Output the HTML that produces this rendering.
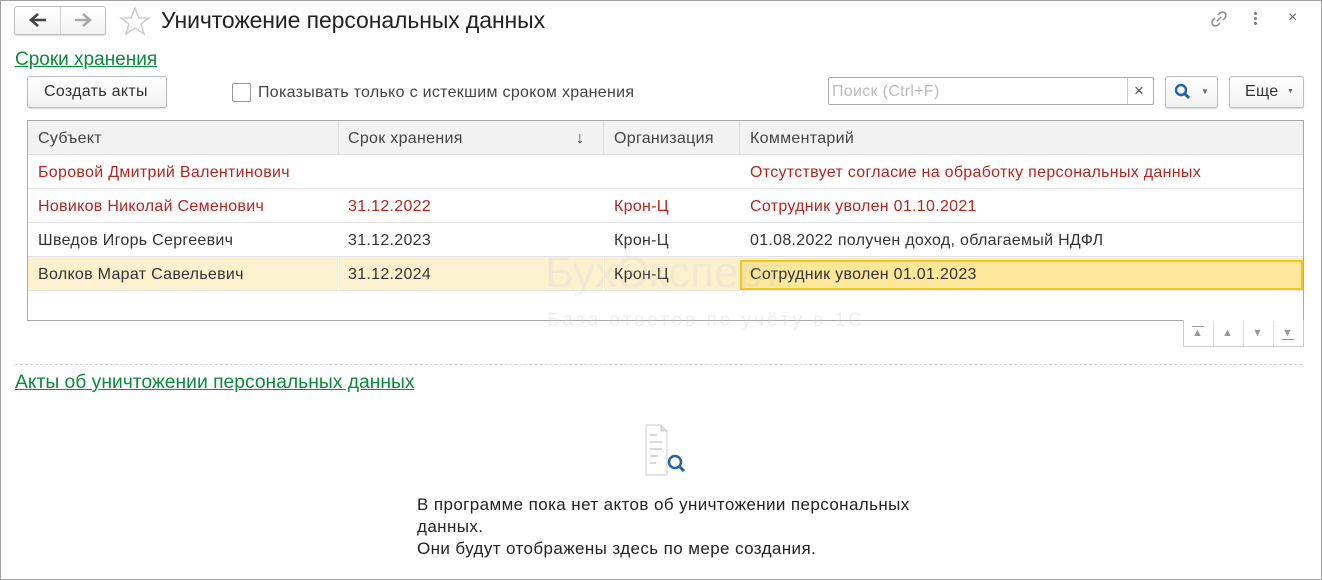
<!DOCTYPE html>
<html><head><meta charset="utf-8"><style>
*{box-sizing:border-box;margin:0;padding:0}
body{width:1322px;height:580px;overflow:hidden;background:#fff;font-family:"Liberation Sans","Noto Sans CJK SC",sans-serif;font-size:16px;letter-spacing:.3px;color:#333;position:relative}
.frame{position:absolute;left:0;top:0;width:1322px;height:580px;border:1px solid #a0a0a0}
.abs{position:absolute;white-space:nowrap}
.btn{position:absolute;border:1px solid #bdbdbd;border-radius:3px;background:linear-gradient(#fff,#f2f2f2);box-shadow:0 1px 1px rgba(0,0,0,.15)}
.link{color:#0a8a3a;text-decoration:underline;font-size:19px;letter-spacing:0}
.row{position:absolute;left:28px;width:1275px;height:34px;border-bottom:1px solid #e4e4e4}
.c{position:absolute;top:9px;white-space:nowrap}
.red{color:#b3261e}
</style></head><body>
<div class="frame"></div>
<div class="btn" style="left:14px;top:6px;width:92px;height:29px"></div>
<div class="abs" style="left:60px;top:7px;width:1px;height:27px;background:#d0d0d0"></div>
<svg class="abs" style="left:28px;top:12px" width="20" height="16" viewBox="0 0 20 16"><path d="M18 8 H5 M10 2 L3 8 L10 14" fill="none" stroke="#444" stroke-width="2.6"/></svg>
<svg class="abs" style="left:73px;top:12px" width="20" height="16" viewBox="0 0 20 16"><path d="M2 8 H15 M10 2 L17 8 L10 14" fill="none" stroke="#aaa" stroke-width="2.6"/></svg>
<svg class="abs" style="left:119px;top:6px" width="32" height="30" viewBox="0 0 32 30"><polygon points="16,2 20,12 30,12 22,18 25,28 16,22 7,28 10,18 2,12 12,12" fill="none" stroke="#c8c8c8" stroke-width="1.3"/></svg>
<div class="abs" style="left:161px;top:7px;font-size:23px;letter-spacing:-.1px;color:#222">Уничтожение персональных данных</div>
<svg class="abs" style="left:1209px;top:9px" width="20" height="20" viewBox="0 0 20 20"><g fill="none" stroke="#888" stroke-width="1.5"><path d="M8 12 L12 8"/><path d="M9 6 L11 4 a3 3 0 0 1 5 5 L14 11"/><path d="M11 14 L9 16 a3 3 0 0 1 -5 -5 L6 9"/></g></svg>
<div class="abs" style="left:1254px;top:11px;width:3px;height:14px;background:radial-gradient(circle,#777 1.3px,transparent 1.6px) 0 0/3px 5px"></div>
<div class="abs" style="left:1288px;top:9px;font-size:16px;color:#666">×</div>
<div class="abs link" style="left:15px;top:49px">Сроки хранения</div>
<div class="btn" style="left:27px;top:76px;width:140px;height:32px"></div>
<div class="abs" style="left:44px;top:83px;color:#333">Создать акты</div>
<div class="abs" style="left:232px;top:83px;width:19px;height:19px;border:1px solid #999;border-radius:2px;background:#fff"></div>
<div class="abs" style="left:258px;top:84px;color:#444">Показывать только с истекшим сроком хранения</div>
<div class="abs" style="left:828px;top:77px;width:326px;height:28px;border:1px solid #aaa;border-radius:2px;background:#fff"></div>
<div class="abs" style="left:1127px;top:78px;width:1px;height:26px;background:#ccc"></div>
<div class="abs" style="left:832px;top:83px;color:#bbb">Поиск (Ctrl+F)</div>
<div class="abs" style="left:1134px;top:81px;color:#555;font-size:17px">×</div>
<div class="btn" style="left:1165px;top:76px;width:53px;height:32px"></div>
<svg class="abs" style="left:1174px;top:83px" width="18" height="18" viewBox="0 0 18 18"><circle cx="7" cy="7" r="5" fill="none" stroke="#1d64a8" stroke-width="2.4"/><path d="M10.5 10.5 L15 15" stroke="#1d64a8" stroke-width="3"/></svg>
<div class="abs" style="left:1201px;top:87px;font-size:8px;color:#666">▼</div>
<div class="btn" style="left:1229px;top:76px;width:75px;height:32px"></div>
<div class="abs" style="left:1245px;top:83px;color:#333">Еще</div>
<div class="abs" style="left:1287px;top:88px;font-size:7px;color:#666">▼</div>

<div class="abs" style="left:27px;top:120px;width:1277px;height:201px;border:1px solid #a9a9a9;background:#fff"></div>
<div class="abs" style="left:28px;top:121px;width:1275px;height:34px;background:#f2f2f2;border-bottom:1px solid #ddd"></div>
<div class="abs" style="left:338px;top:121px;width:1px;height:34px;background:#ddd"></div>
<div class="abs" style="left:603px;top:121px;width:1px;height:34px;background:#ddd"></div>
<div class="abs" style="left:739px;top:121px;width:1px;height:34px;background:#ddd"></div>
<div class="abs" style="left:38px;top:130px;color:#444">Субъект</div>
<div class="abs" style="left:348px;top:130px;color:#444">Срок хранения</div>
<div class="abs" style="left:576px;top:130px;color:#444">↓</div>
<div class="abs" style="left:614px;top:130px;color:#444">Организация</div>
<div class="abs" style="left:750px;top:130px;color:#444">Комментарий</div>

<div class="row red" style="top:155px"><span class="c" style="left:10px">Боровой Дмитрий Валентинович</span><span class="c" style="left:722px">Отсутствует согласие на обработку персональных данных</span></div>
<div class="row red" style="top:189px"><span class="c" style="left:10px">Новиков Николай Семенович</span><span class="c" style="left:320px">31.12.2022</span><span class="c" style="left:586px">Крон-Ц</span><span class="c" style="left:722px">Сотрудник уволен 01.10.2021</span></div>
<div class="row" style="top:223px"><span class="c" style="left:10px">Шведов Игорь Сергеевич</span><span class="c" style="left:320px">31.12.2023</span><span class="c" style="left:586px">Крон-Ц</span><span class="c" style="left:722px">01.08.2022 получен доход, облагаемый НДФЛ</span></div>
<div class="row" style="top:257px;background:#fcf1cf"><span class="c" style="left:10px">Волков Марат Савельевич</span><span class="c" style="left:320px">31.12.2024</span><span class="c" style="left:586px">Крон-Ц</span></div>
<div class="abs" style="left:338px;top:257px;width:1px;height:34px;background:#fff"></div>
<div class="abs" style="left:603px;top:257px;width:1px;height:34px;background:#fff"></div>
<div class="abs" style="left:740px;top:260px;width:563px;height:30px;background:#fde79a;border:2px solid #f5c518"></div>
<div class="abs" style="left:750px;top:266px;color:#333">Сотрудник уволен 01.01.2023</div>
<div class="abs" style="left:545px;top:248px;font-size:44px;letter-spacing:0;color:rgba(200,200,200,.2)">БухЭксперт</div>
<div class="abs" style="left:547px;top:310px;font-size:19px;letter-spacing:3px;color:rgba(200,200,200,.3)">База ответов по учёту в 1С</div>

<div class="abs" style="left:1183px;top:320px;width:121px;height:27px;border:1px solid #ccc;border-top:none;background:#fff"></div>
<div class="abs" style="left:1213px;top:321px;width:1px;height:25px;background:#ddd"></div>
<div class="abs" style="left:1243px;top:321px;width:1px;height:25px;background:#ddd"></div>
<div class="abs" style="left:1273px;top:321px;width:1px;height:25px;background:#ddd"></div>
<div class="abs" style="left:1192px;top:327px;font-size:11px;color:#999">▲</div>
<div class="abs" style="left:1222px;top:327px;font-size:11px;color:#999">▲</div>
<div class="abs" style="left:1252px;top:327px;font-size:11px;color:#999">▼</div>
<div class="abs" style="left:1282px;top:327px;font-size:11px;color:#999">▼</div>
<div class="abs" style="left:1192px;top:326px;width:12px;height:1px;background:#999"></div>
<div class="abs" style="left:1282px;top:339px;width:12px;height:1px;background:#999"></div>

<div class="abs" style="left:15px;top:364px;width:1287px;border-top:1px dashed #d4d4d4"></div>
<div class="abs link" style="left:15px;top:372px;font-size:19.3px">Акты об уничтожении персональных данных</div>

<svg class="abs" style="left:645px;top:424px" width="48" height="52" viewBox="0 0 48 52"><path d="M1 1 H16 L22 7 V51 H1 Z" fill="#fff" stroke="#ccc"/><path d="M16 1 V7 H22" fill="#ddd" stroke="#ccc"/><g stroke="#ccc" stroke-width="1.5"><path d="M5 11h7M5 18h12M5 25h12M5 32h8M5 39h6"/></g><circle cx="30" cy="38" r="6" fill="#fff" stroke="#1d64a8" stroke-width="2.5"/><path d="M34 42 L39 47" stroke="#1d64a8" stroke-width="3"/></svg>
<div class="abs" style="left:417px;top:494px;color:#222;line-height:22px;font-size:17px;letter-spacing:.4px">В программе пока нет актов об уничтожении персональных<br>данных.<br>Они будут отображены здесь по мере создания.</div>
</body></html>
